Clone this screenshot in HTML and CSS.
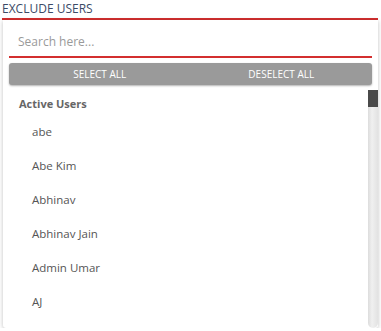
FILE: index.html
```html
<!DOCTYPE html>
<html lang="en">
<head>
<meta charset="UTF-8">
<title>Exclude users</title>
<link rel="stylesheet" href="styles.css">
</head>
<body>
<div class="field">
    <div class="field-label">EXCLUDE USERS</div>

    <div class="dropdown">
        <div class="search">
            <input type="text" placeholder="Search here...">
        </div>

        <div class="actions">
            <button>SELECT ALL</button>
            <button>DESELECT ALL</button>
        </div>

        <div class="list-wrap">
            <div class="list">
                <div class="group-title">Active Users</div>
                <div class="item">abe</div>
                <div class="item">Abe Kim</div>
                <div class="item">Abhinav</div>
                <div class="item">Abhinav Jain</div>
                <div class="item">Admin Umar</div>
                <div class="item">AJ</div>
            </div>
            <div class="scrollbar"><div class="thumb"></div></div>
        </div>
    </div>
</div>
</body>
</html>
```

FILE: styles.css
```css
body { margin: 0; background: #fff; font-family: "Open Sans", "Noto Sans", sans-serif; }

.field { padding: 1px 3px 0 2px; width: 381px; box-sizing: border-box; }
.field-label {
    font-size: 12px; color: #3b4a66; line-height: 16px;
    border-bottom: 2px solid #d32f2f; padding-bottom: 1px;
}

.dropdown {
    margin: 0 0 0 1px; background: #fff; height: 308px;
    box-shadow: 0 1px 4px rgba(0,0,0,.25);
    border-radius: 0 0 3px 3px; overflow: hidden;
    display: flex; flex-direction: column;
}

.search { padding: 9px 6px 0 6px; }
.search input {
    width: 100%; box-sizing: border-box; border: none; outline: none;
    border-bottom: 2px solid #d32f2f; font-family: inherit;
    font-size: 12px; padding: 4px 9px 6px; color: #333;
}
.search input::placeholder { color: #9a9a9a; }

.actions {
    display: flex; margin: 5px 6px 0; background: #9a9a9a;
    border-radius: 3px; height: 22px;
    box-shadow: 0 1px 2px rgba(0,0,0,.3);
}
.actions button {
    flex: 1; background: none; border: none; color: #fff;
    font-family: inherit; font-size: 10px; font-weight: 400; cursor: pointer;
}

.list-wrap { display: flex; flex: 1; margin-top: 5px; min-height: 0; }
.list { flex: 1; }
.group-title {
    font-size: 11px; font-weight: 700; color: #666;
    padding: 6px 0 0 16px; line-height: 16px; margin-bottom: 3px;
}
.item { font-size: 11.5px; color: #555; padding-left: 29px; height: 34px; line-height: 34px; }

.scrollbar {
    width: 10px;
    background: linear-gradient(to right, #dcdcdc, #f0f0f0 40%, #e2e2e2);
    border-radius: 0 0 5px 5px;
}
.thumb { height: 17px; background: #4a4a4a; }
```
